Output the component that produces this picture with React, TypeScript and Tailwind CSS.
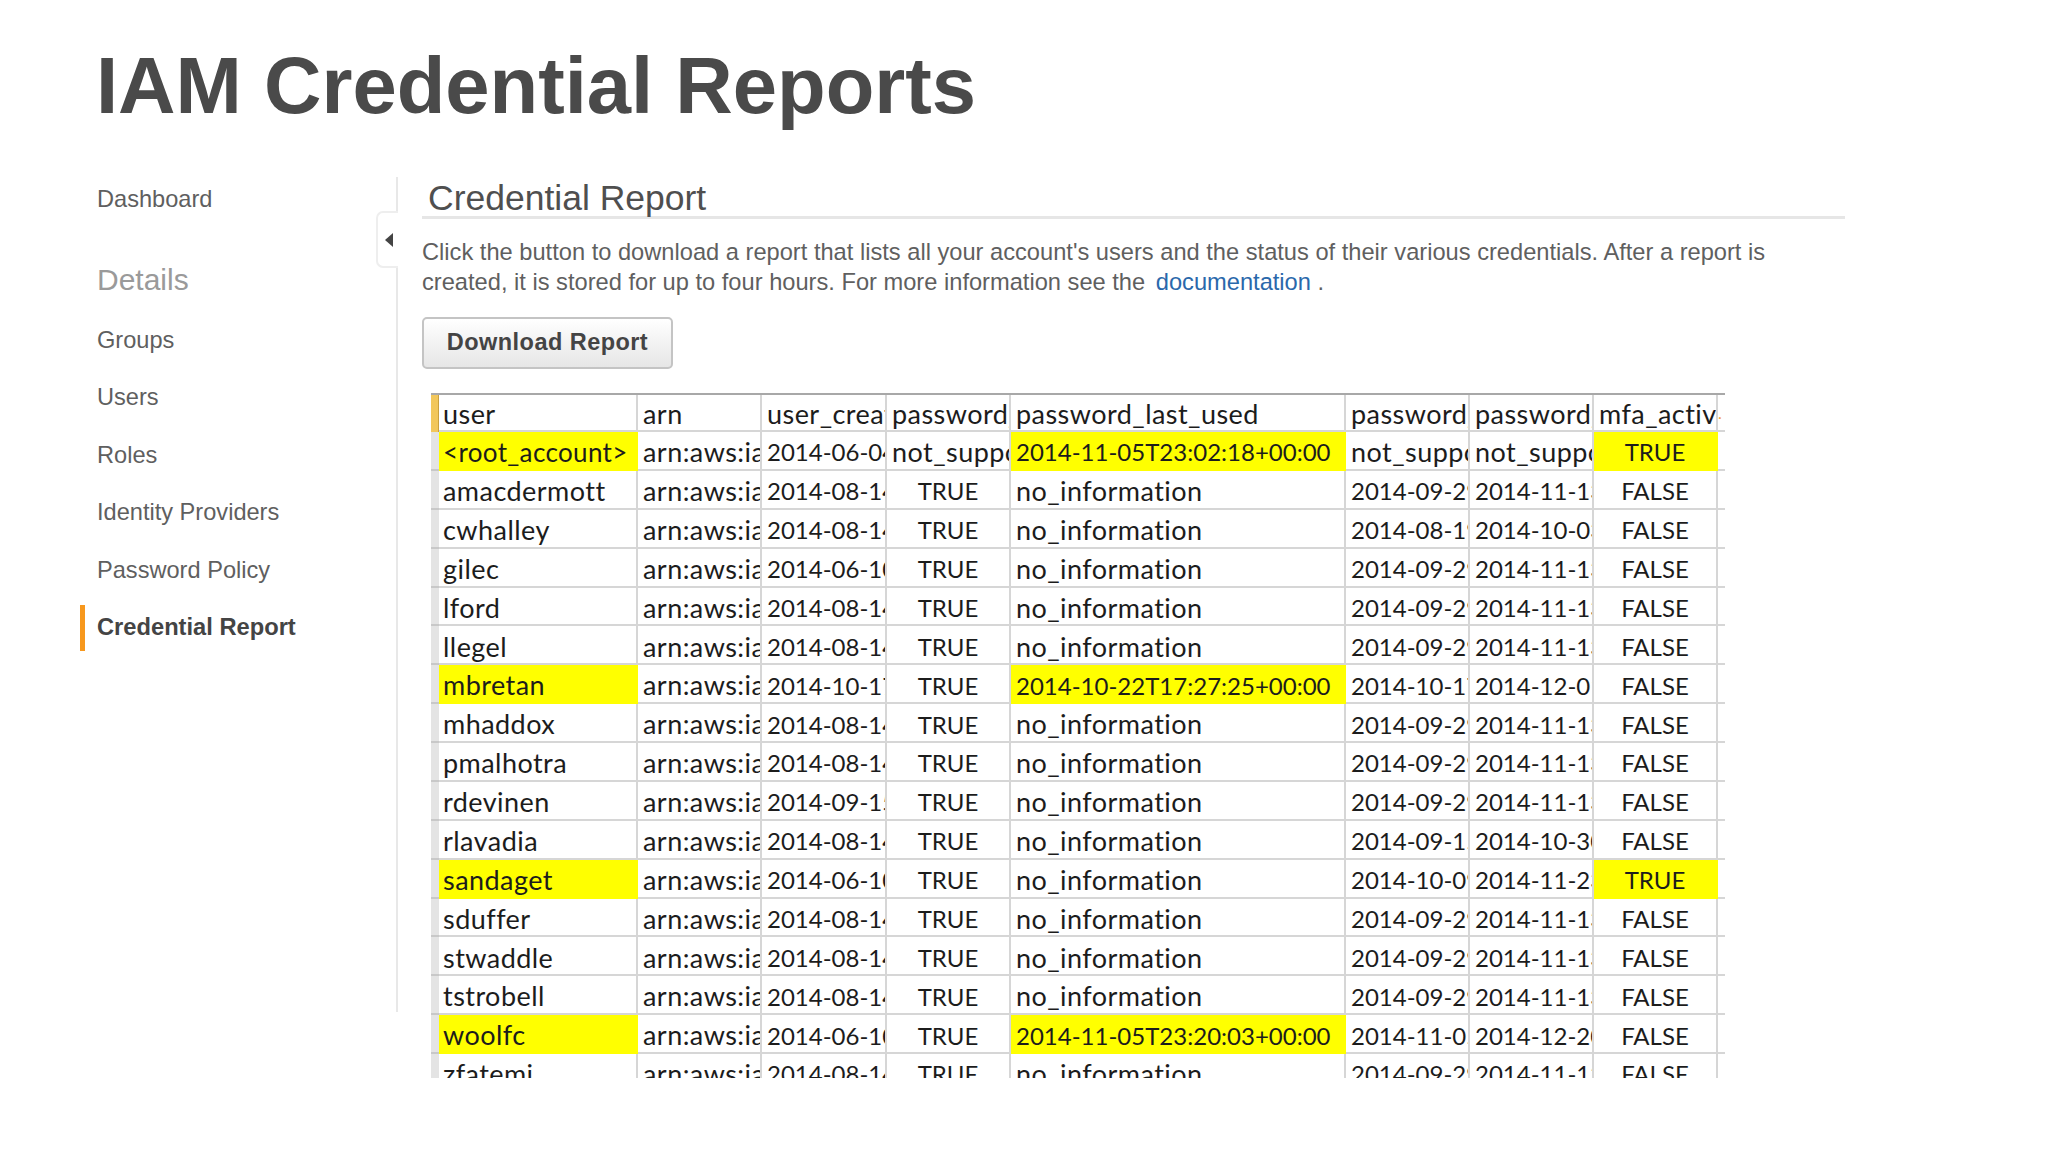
const navItems = ["Groups", "Users", "Roles", "Identity Providers", "Password Policy"];

type Row = {
  user: string;
  created: string;
  pw: string;
  last: string;
  changed: string;
  next: string;
  mfa: string;
  hlUser?: boolean;
  hlLast?: boolean;
  hlMfa?: boolean;
};

const rows: Row[] = [
  { user: "<root_account>", created: "2014-06-04", pw: "not_supported", last: "2014-11-05T23:02:18+00:00", changed: "not_supported", next: "not_supported", mfa: "TRUE", hlUser: true, hlLast: true, hlMfa: true },
  { user: "amacdermott", created: "2014-08-14", pw: "TRUE", last: "no_information", changed: "2014-09-29", next: "2014-11-13", mfa: "FALSE" },
  { user: "cwhalley", created: "2014-08-14", pw: "TRUE", last: "no_information", changed: "2014-08-19", next: "2014-10-03", mfa: "FALSE" },
  { user: "gilec", created: "2014-06-10", pw: "TRUE", last: "no_information", changed: "2014-09-29", next: "2014-11-13", mfa: "FALSE" },
  { user: "lford", created: "2014-08-14", pw: "TRUE", last: "no_information", changed: "2014-09-29", next: "2014-11-13", mfa: "FALSE" },
  { user: "llegel", created: "2014-08-14", pw: "TRUE", last: "no_information", changed: "2014-09-29", next: "2014-11-13", mfa: "FALSE" },
  { user: "mbretan", created: "2014-10-17", pw: "TRUE", last: "2014-10-22T17:27:25+00:00", changed: "2014-10-17", next: "2014-12-01", mfa: "FALSE", hlUser: true, hlLast: true },
  { user: "mhaddox", created: "2014-08-14", pw: "TRUE", last: "no_information", changed: "2014-09-29", next: "2014-11-13", mfa: "FALSE" },
  { user: "pmalhotra", created: "2014-08-14", pw: "TRUE", last: "no_information", changed: "2014-09-29", next: "2014-11-13", mfa: "FALSE" },
  { user: "rdevinen", created: "2014-09-15", pw: "TRUE", last: "no_information", changed: "2014-09-29", next: "2014-11-13", mfa: "FALSE" },
  { user: "rlavadia", created: "2014-08-14", pw: "TRUE", last: "no_information", changed: "2014-09-15", next: "2014-10-30", mfa: "FALSE" },
  { user: "sandaget", created: "2014-06-10", pw: "TRUE", last: "no_information", changed: "2014-10-09", next: "2014-11-23", mfa: "TRUE", hlUser: true, hlMfa: true },
  { user: "sduffer", created: "2014-08-14", pw: "TRUE", last: "no_information", changed: "2014-09-29", next: "2014-11-13", mfa: "FALSE" },
  { user: "stwaddle", created: "2014-08-14", pw: "TRUE", last: "no_information", changed: "2014-09-29", next: "2014-11-13", mfa: "FALSE" },
  { user: "tstrobell", created: "2014-08-14", pw: "TRUE", last: "no_information", changed: "2014-09-29", next: "2014-11-13", mfa: "FALSE" },
  { user: "woolfc", created: "2014-06-10", pw: "TRUE", last: "2014-11-05T23:20:03+00:00", changed: "2014-11-05", next: "2014-12-20", mfa: "FALSE", hlUser: true, hlLast: true },
  { user: "zfatemi", created: "2014-08-14", pw: "TRUE", last: "no_information", changed: "2014-09-29", next: "2014-11-13", mfa: "FALSE" },
];

function Cell({ text, hl, center, tight }: { text: string; hl?: boolean; center?: boolean; tight?: boolean }) {
  const narrow = /^[0-9]/.test(text) || text === "TRUE" || text === "FALSE";
  const size = narrow ? "text-[24px]" : text.startsWith("<") ? "text-[26px] tracking-[0.35px]" : "text-[27px] tracking-[0.45px]";
  return (
    <div
      className={`flex items-center overflow-hidden whitespace-nowrap pt-[4px] border-r-2 border-b-2 ${
        hl ? "bg-[#ffff00] border-[#ffff00]" : "border-[#d6d6d6]"
      } ${center ? "justify-center" : tight ? "pl-[4px]" : "pl-[5px]"} ${size}`}
    >
      {text}
    </div>
  );
}

export default function App() {
  return (
    <div className="w-[2048px] h-[1152px] overflow-hidden bg-white font-['Liberation_Sans',Arial,sans-serif]">
      <h1 className="pl-[96px] pt-[40px] h-[177px] text-[79.6px] leading-[92px] font-bold text-[#4a4a4a]">
        IAM Credential Reports
      </h1>
      <div className="flex items-start">
        <aside className="relative w-[398px] h-[835px] shrink-0 border-r-2 border-[#e8e8e8] pl-[80px] pt-[1px] text-[23.6px] text-[#5f5f5f]">
          <div className="h-[44px] pl-[17px] flex items-center">Dashboard</div>
          <div className="h-[48px] mt-[33px] mb-[8.5px] pl-[17px] flex items-center text-[30px] text-[#9a9a9a]">
            Details
          </div>
          {navItems.map((item) => (
            <div key={item} className="h-[57.5px] pl-[17px] flex items-center">
              {item}
            </div>
          ))}
          <div className="h-[57.5px] flex items-center">
            <span className="h-[46px] pl-[12px] flex items-center border-l-[5px] border-[#f7981d] text-[#444444] font-bold text-[23.7px]">
              Credential Report
            </span>
          </div>
          <div className="absolute left-[376px] top-[34px] w-[22px] h-[57px] bg-white border-2 border-r-0 border-[#eeeeee] rounded-l-[7px] flex items-center pl-[7px]">
            <svg width="8" height="14" viewBox="0 0 8 14">
              <path d="M8 0 L0 7 L8 14 Z" fill="#444444" />
            </svg>
          </div>
        </aside>
        <main className="pl-[24px] w-[1447px]">
          <h2 className="h-[38px] pl-[6px] pt-[5px] flex items-center text-[35.5px] text-[#4f4f4f] leading-none">
            Credential Report
          </h2>
          <div className="h-[3px] bg-[#e6e6e6] mt-[1px]" />
          <p className="mt-[18px] w-[1400px] text-[23.67px] leading-[30px] text-[#5f5f5f]">
            Click the button to download a report that lists all your account's users and the status of their various
            credentials. After a report is
            <br />
            created, it is stored for up to four hours. For more information see the{" "}
            <span className="ml-[4px] text-[#2a68ab]">documentation</span> .
          </p>
          <button className="mt-[20px] w-[251px] h-[52px] rounded-[5px] border-2 border-[#c4c4c4] bg-gradient-to-b from-white to-[#e6e6e6] text-[23.5px] tracking-[0.45px] font-bold text-[#444444] flex items-center justify-center">
            Download Report
          </button>
          <div className="mt-[24px] ml-[9px] w-[1294px] h-[685px] overflow-hidden border-t-2 border-[#a8a8a8] font-['Lato',sans-serif] text-[#1c1c1c]">
            <div className="grid grid-cols-[8px_199px_124px_125px_124px_335px_124px_124px_124px_7px] grid-rows-[37px_repeat(17,38.875px)]">
              <div className="bg-[#f2c75c] border-r border-[#c9a040]" />
              <Cell text="user" tight />
              <Cell text="arn" />
              <Cell text="user_creation_time" />
              <Cell text="password_enabled" />
              <Cell text="password_last_used" />
              <Cell text="password_last_changed" />
              <Cell text="password_next_rotation" />
              <Cell text="mfa_active" />
              <div className="border-b-2 border-[#d6d6d6] text-[#f2a03c] text-[16px] leading-[36px]">.</div>
              {rows.map((r) => (
                <div key={r.user} className="contents">
                  <div className="bg-[#e4e4e4] border-b-2 border-[#c8c8c8]" />
                  <Cell text={r.user} hl={r.hlUser} tight />
                  <Cell text="arn:aws:iam::" />
                  <Cell text={r.created} />
                  <Cell text={r.pw} center={r.pw === "TRUE"} />
                  <Cell text={r.last} hl={r.hlLast} />
                  <Cell text={r.changed} />
                  <Cell text={r.next} />
                  <Cell text={r.mfa} hl={r.hlMfa} center />
                  <div className="border-b-2 border-[#d6d6d6]" />
                </div>
              ))}
            </div>
          </div>
        </main>
      </div>
    </div>
  );
}
